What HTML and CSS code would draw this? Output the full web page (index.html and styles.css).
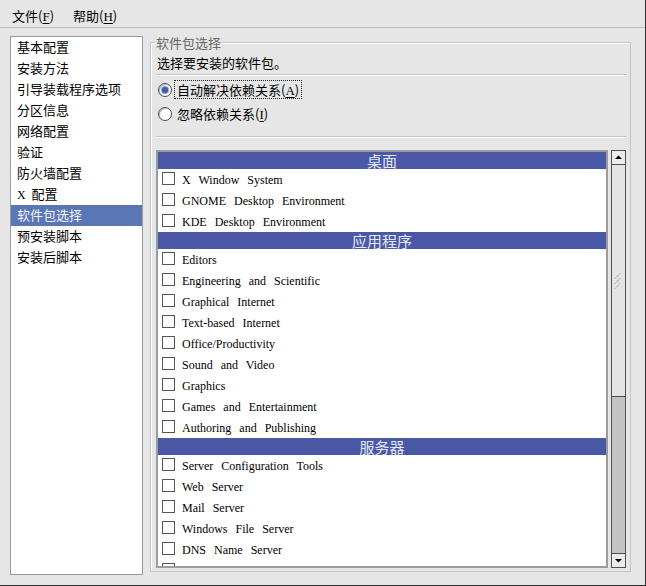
FILE: index.html
```html
<!DOCTYPE html>
<html>
<head>
<meta charset="utf-8">
<link rel="stylesheet" href="styles.css">
</head>
<body>
<div class="window">
  <div class="menubar">
    <span class="menu">文件(<u>F</u>)</span>
    <span class="menu">帮助(<u>H</u>)</span>
  </div>
  <div class="main">
    <div class="nav">
      <div class="nav-item">基本配置</div>
      <div class="nav-item">安装方法</div>
      <div class="nav-item">引导装载程序选项</div>
      <div class="nav-item">分区信息</div>
      <div class="nav-item">网络配置</div>
      <div class="nav-item">验证</div>
      <div class="nav-item">防火墙配置</div>
      <div class="nav-item"><span class="lat">X</span>&nbsp;&nbsp;配置</div>
      <div class="nav-item selected">软件包选择</div>
      <div class="nav-item">预安装脚本</div>
      <div class="nav-item">安装后脚本</div>
    </div>
    <div class="frame">
      <span class="frame-label">软件包选择</span>
      <div class="desc">选择要安装的软件包。</div>
      <div class="sep sep-top"></div>
      <div class="radio-row first">
        <span class="radio checked"><span class="dot"></span></span>
        <span class="radio-label focus">自动解决依赖关系(<u class="lat">A</u>)</span>
      </div>
      <div class="radio-row">
        <span class="radio"></span>
        <span class="radio-label">忽略依赖关系(<u class="lat">I</u>)</span>
      </div>
      <div class="sep sep-bottom"></div>
      <div class="list-area">
        <div class="list">
          <div class="group">桌面</div>
          <div class="row"><span class="check"></span><span class="lat">X Window System</span></div>
          <div class="row"><span class="check"></span><span class="lat">GNOME Desktop Environment</span></div>
          <div class="row"><span class="check"></span><span class="lat">KDE Desktop Environment</span></div>
          <div class="group">应用程序</div>
          <div class="row"><span class="check"></span><span class="lat">Editors</span></div>
          <div class="row"><span class="check"></span><span class="lat">Engineering and Scientific</span></div>
          <div class="row"><span class="check"></span><span class="lat">Graphical Internet</span></div>
          <div class="row"><span class="check"></span><span class="lat">Text-based Internet</span></div>
          <div class="row"><span class="check"></span><span class="lat">Office/Productivity</span></div>
          <div class="row"><span class="check"></span><span class="lat">Sound and Video</span></div>
          <div class="row"><span class="check"></span><span class="lat">Graphics</span></div>
          <div class="row"><span class="check"></span><span class="lat">Games and Entertainment</span></div>
          <div class="row"><span class="check"></span><span class="lat">Authoring and Publishing</span></div>
          <div class="group">服务器</div>
          <div class="row"><span class="check"></span><span class="lat">Server Configuration Tools</span></div>
          <div class="row"><span class="check"></span><span class="lat">Web Server</span></div>
          <div class="row"><span class="check"></span><span class="lat">Mail Server</span></div>
          <div class="row"><span class="check"></span><span class="lat">Windows File Server</span></div>
          <div class="row"><span class="check"></span><span class="lat">DNS Name Server</span></div>
          <div class="row"><span class="check"></span><span class="lat">FTP Server</span></div>
        </div>
        <div class="scrollbar">
          <div class="sb-btn">
            <svg width="13" height="13" viewBox="0 0 13 13"><path d="M3 8 L6.5 4.5 L10 8 Z" fill="#000"/></svg>
          </div>
          <div class="sb-thumb">
            <svg class="grip" width="11" height="16" viewBox="0 0 11 16">
              <path d="M2 5.5 L7.5 0 M2 10.5 L7.5 5 M2 15.5 L7.5 10" stroke="#707070" stroke-width="1" stroke-dasharray="1 1"/>
            </svg>
          </div>
          <div class="sb-trough"></div>
          <div class="sb-btn down">
            <svg width="13" height="13" viewBox="0 0 13 13"><path d="M3 5 L6.5 8.5 L10 5 Z" fill="#000"/></svg>
          </div>
        </div>
      </div>
    </div>
  </div>
</div>
</body>
</html>
```
FILE: styles.css
```css
* { box-sizing: border-box; }
html, body { margin: 0; padding: 0; }
body {
  font-family: "Noto Sans CJK SC", "Liberation Serif", serif;
  font-size: 13px;
  color: #000;
  background: #e6e6e6;
}
.window {
  width: 646px;
  height: 586px;
  background: #e6e6e6;
  border-right: 1px solid #2e2e2e;
  border-bottom: 1px solid #2e2e2e;
  display: flex;
  flex-direction: column;
  overflow: hidden;
}
.menubar {
  height: 28px;
  border-bottom: 1px solid #bdbdbd;
  padding: 7px 0 0 12px;
  display: flex;
  gap: 19px;
  line-height: 17px;
}
.menu { white-space: nowrap; }
.menu u { font-family: "Liberation Serif", serif; text-underline-offset: 2px; }
.lat {
  font-family: "Liberation Serif", "Noto Sans CJK SC", serif;
  font-size: 12px;
  word-spacing: 5px;
}
.main {
  display: flex;
  padding: 8px 0 0 10px;
}
.nav {
  width: 133px;
  height: 539px;
  background: #fff;
  border: 1px solid #9a9a9a;
}
.nav-item {
  height: 21px;
  line-height: 20px;
  padding-left: 6px;
  white-space: nowrap;
}
.nav-item.selected {
  background: #5b76b4;
  color: #f2f4fa;
}
.frame {
  position: relative;
  margin: 6px 0 0 7px;
  width: 481px;
  height: 530px;
  border: 1px solid #c4c4c4;
  box-shadow: inset 1px 1px 0 #fff;
  padding: 11px 4px 3px 5px;
  display: flex;
  flex-direction: column;
}
.frame-label {
  position: absolute;
  top: -9px;
  left: 4px;
  padding: 0 1px;
  background: #e6e6e6;
  color: #666;
  line-height: 17px;
}
.desc {
  height: 17px;
  line-height: 17px;
  padding-left: 1px;
}
.sep {
  height: 2px;
  border-top: 1px solid #c4c4c4;
  border-bottom: 1px solid #fff;
}
.sep-top { margin-top: 3px; }
.sep-bottom { margin-top: 13px; }
.radio-row {
  display: flex;
  align-items: center;
  height: 19px;
  margin-top: 5px;
}
.radio-row.first { margin-top: 4px; }
.radio {
  width: 14px;
  height: 14px;
  margin-left: 2px;
  border-radius: 50%;
  border: 1px solid #4a4a4a;
  background: #fff;
  box-shadow: inset 1px 1px 0 #bbb;
  display: flex;
  align-items: center;
  justify-content: center;
}
.radio .dot {
  width: 6px;
  height: 6px;
  border-radius: 50%;
  background: #3f5aa8;
  box-shadow: 0 0 0 1px #8fa0d0;
}
.radio-label {
  margin-left: 2px;
  height: 19px;
  line-height: 17px;
  padding: 0 2px;
  border: 1px solid transparent;
  white-space: nowrap;
}
.radio-label.focus { border: 1px dotted #222; }
.radio-label u { font-size: 13px; text-underline-offset: 2px; }
.list-area {
  margin-top: 12px;
  height: 418px;
  display: flex;
  gap: 3px;
}
.list {
  width: 452px;
  height: 418px;
  border: 2px solid #9c9c9c;
  background: #fff;
  overflow: hidden;
}
.group {
  height: 17px;
  line-height: 17px;
  background: #4a59a5;
  color: #e4e8f4;
  text-align: center;
  font-size: 15px;
}
.row {
  height: 21px;
  display: flex;
  align-items: flex-start;
  white-space: nowrap;
}
.check {
  width: 13px;
  height: 13px;
  margin: 3px 7px 0 4px;
  border: 1px solid #555;
  background: #fff;
  flex: none;
}
.row .lat { line-height: 21px; padding-top: 1px; }
.scrollbar {
  width: 15px;
  height: 418px;
  display: flex;
  flex-direction: column;
  border: 1px solid #4f4f4f;
  background: #c3c3c3;
}
.sb-btn {
  height: 14px;
  background: #ececec;
  border-bottom: 1px solid #4f4f4f;
  display: flex;
  align-items: center;
  justify-content: center;
  flex: none;
}
.sb-btn.down {
  border-bottom: none;
  border-top: 1px solid #4f4f4f;
  height: 14px;
}
.sb-thumb {
  height: 232px;
  background: #e4e4e4;
  border-bottom: 1px solid #4f4f4f;
  display: flex;
  align-items: center;
  justify-content: center;
  flex: none;
}
.sb-trough { flex: 1; }
```
